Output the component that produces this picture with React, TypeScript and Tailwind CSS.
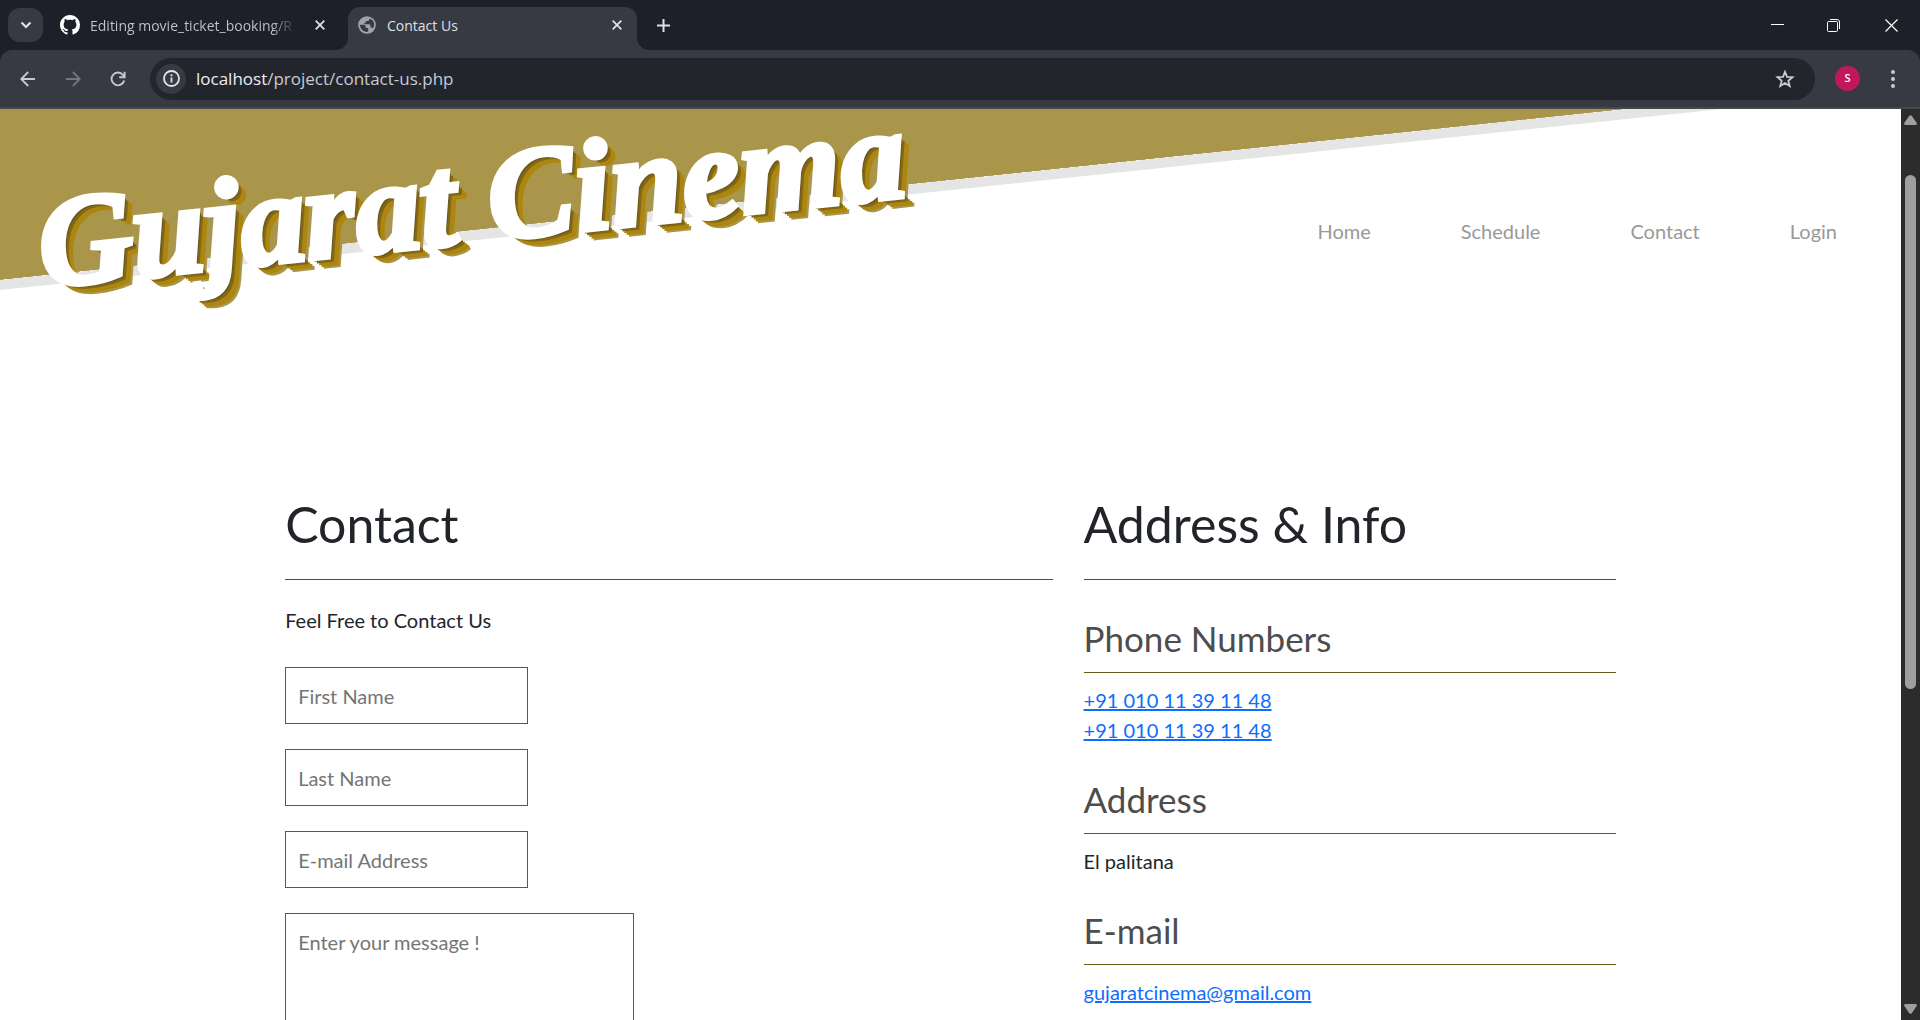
import type { ReactNode } from "react";

const navLinks = ["Home", "Schedule", "Contact", "Login"];

function TitleBar() {
  return (
    <header className="flex h-[50px] shrink-0 items-stretch bg-[#1d2029] pl-2 text-[#dfe0e6]">
      <button aria-label="Search tabs" className="mt-2 flex h-[34px] w-[35px] items-center justify-center rounded-xl bg-[#383a43]">
        <svg width="12" height="8" viewBox="0 0 12 8" fill="none" stroke="currentColor" strokeWidth="2.200">
          <path d="M1.500 1.500 6 6 10.500 1.500" />
        </svg>
      </button>

      <div className="flex w-[305px] items-center pr-[23px] pl-[17px]">
        <svg width="20" height="20" viewBox="0 0 16 16" fill="#fff" className="shrink-0">
          <path d="M8 0C3.58 0 0 3.58 0 8c0 3.54 2.29 6.53 5.47 7.59.4.07.55-.17.55-.38 0-.19-.01-.82-.01-1.49-2.01.37-2.53-.49-2.69-.94-.09-.23-.48-.94-.82-1.13-.28-.15-.68-.52-.01-.53.63-.01 1.08.58 1.23.82.72 1.21 1.87.87 2.33.66.07-.52.28-.87.51-1.07-1.78-.2-3.64-.89-3.64-3.95 0-.87.31-1.59.82-2.15-.08-.2-.36-1.02.08-2.12 0 0 .67-.21 2.2.82.64-.18 1.32-.27 2-.27s1.36.09 2 .27c1.53-1.04 2.2-.82 2.2-.82.44 1.1.16 1.92.08 2.12.51.56.82 1.27.82 2.15 0 3.07-1.87 3.75-3.65 3.95.29.25.54.73.54 1.48 0 1.07-.01 1.93-.01 2.2 0 .21.15.46.55.38A8.01 8.01 0 0 0 16 8c0-4.42-3.58-8-8-8Z" />
        </svg>
        <span className="ml-[10px] bg-linear-to-r from-[#c3c6d0] from-90% to-[#3a3d46] bg-clip-text text-[14px] whitespace-nowrap text-transparent">
          Editing movie_ticket_booking/R
        </span>
        <button aria-label="Close tab" className="ml-auto">
          <Cross />
        </button>
      </div>

      <div className="relative mt-[7px] flex w-[289px] items-center rounded-t-xl bg-[#383a43] pr-[15px] pb-[7px] pl-[10px]">
        <span className="absolute bottom-0 -left-3 size-3 bg-[radial-gradient(circle_at_0_0,transparent_12px,#383a43_12px)]" />
        <span className="absolute -right-3 bottom-0 size-3 bg-[radial-gradient(circle_at_100%_0,transparent_12px,#383a43_12px)]" />
        <svg width="18" height="18" viewBox="0 0 18 18">
          <circle cx="9" cy="9" r="8.8" fill="#9fa3ae" />
          <path
            d="M1.900 8.800h3.300c1.700 0 2.600.9 2.600 2.200v.9h2.400v3.900c-4.300.7-8.100-2.400-8.300-7ZM11.600 2.500v.6c0 1.200-.9 2-2.100 2H7.900v1.700H6.200v1.500h4.700c.9 0 1.500.6 1.500 1.500v1.600h.8c.8 0 1.400.5 1.600 1.200 2.800-3.700 1.300-8.700-3.200-10.100Z"
            fill="#383a43"
          />
        </svg>
        <span className="ml-[11px] text-[14px]">Contact Us</span>
        <button aria-label="Close tab" className="ml-auto">
          <Cross />
        </button>
      </div>

      <button aria-label="New tab" className="ml-5 flex items-center">
        <svg width="13" height="13" viewBox="0 0 13 13" stroke="currentColor" strokeWidth="2">
          <path d="M6.500 0v13M0 6.500h13" />
        </svg>
      </button>

      <div className="ml-auto flex">
        <button aria-label="Minimize" className="flex w-[56px] items-center justify-center">
          <svg width="13" height="13" viewBox="0 0 13 13" stroke="#fff">
            <path d="M0 5.500h13" />
          </svg>
        </button>
        <button aria-label="Restore" className="flex w-[57px] items-center justify-center">
          <svg width="13" height="13" viewBox="0 0 13 13" fill="none" stroke="#fff">
            <rect x=".5" y="2.500" width="10" height="10" rx="1" />
            <path d="M3 .5h7a2.500 2.500 0 0 1 2.500 2.500v7" />
          </svg>
        </button>
        <button aria-label="Close" className="flex w-[58px] items-center justify-center">
          <svg width="13" height="13" viewBox="0 0 13 13" stroke="#fff" strokeWidth="1.200">
            <path d="m.5.5 12 12M12.500.5l-12 12" />
          </svg>
        </button>
      </div>
    </header>
  );
}

function Cross() {
  return (
    <svg width="10" height="10" viewBox="0 0 10 10" stroke="currentColor" strokeWidth="1.800">
      <path d="m.7.7 8.600 8.600M9.300.7.700 9.300" />
    </svg>
  );
}

function Toolbar() {
  return (
    <div className="bg-[#1d2029]">
      <div className="flex h-[59px] items-center rounded-t-xl border-b-2 border-[#47474b] bg-[#383a43] pl-5 text-[#c7cad3]">
        <button aria-label="Back" className="flex w-[45px]">
          <svg width="16" height="16" viewBox="0 0 16 16" fill="none" stroke="currentColor" strokeWidth="1.800">
            <path d="M15 8H1.500M8.200 1 1.200 8l7 7" />
          </svg>
        </button>
        <button aria-label="Forward" className="flex w-[45px] text-[#74767e]">
          <svg width="16" height="16" viewBox="0 0 16 16" fill="none" stroke="currentColor" strokeWidth="1.800">
            <path d="M1 8h13.500M7.800 1l7 7-7 7" />
          </svg>
        </button>
        <button aria-label="Reload" className="flex w-10">
          <svg width="16" height="16" viewBox="0 0 16 16" fill="none" stroke="currentColor" strokeWidth="1.900">
            <path d="M14.200 9.500A6.400 6.400 0 1 1 12.900 3.800L14.500 5.500" />
            <path d="M14.600.8v5.400H9.200" />
          </svg>
        </button>
        <div className="flex h-[42px] flex-1 items-center rounded-full bg-[#23252d] pr-5 pl-[6px]">
          <button aria-label="Site information" className="flex size-[30px] items-center justify-center rounded-full bg-[#383a43] text-[#e3e4e9]">
            <svg width="17" height="17" viewBox="0 0 17 17" fill="none" stroke="currentColor" strokeWidth="1.800">
              <circle cx="8.500" cy="8.500" r="7.500" />
              <path d="M8.500 7.500v5M8.500 4.300v1.900" />
            </svg>
          </button>
          <p className="ml-[10px] text-[17px] text-[#c7cad3]">
            <span className="text-[#ecedf1]">localhost</span>/project/contact-us.php
          </p>
          <button aria-label="Bookmark this tab" className="ml-auto">
            <svg width="20" height="20" viewBox="0 0 20 20" fill="none" stroke="currentColor" strokeWidth="1.800">
              <path d="m10 2.800 2 5 5.500.4-4.200 3.500 1.400 5.300L10 14.100 5.300 17l1.400-5.300-4.200-3.500L8 7.800Z" />
            </svg>
          </button>
        </div>
        <button aria-label="Profile" className="ml-5 flex size-[25px] items-center justify-center rounded-full bg-[#c2185b] text-[11px] font-semibold text-white">
          S
        </button>
        <button aria-label="Menu" className="mr-[17px] ml-[22px] flex w-[21px] justify-center">
          <svg width="4" height="18" viewBox="0 0 4 18" fill="currentColor">
            <circle cx="2" cy="2" r="2" />
            <circle cx="2" cy="9" r="2" />
            <circle cx="2" cy="16" r="2" />
          </svg>
        </button>
      </div>
    </div>
  );
}

function SiteHeader() {
  return (
    <header className="relative flex items-start justify-between pr-16">
      <div className="absolute bottom-[204px] left-0 h-[400px] w-[110%] origin-bottom-left -rotate-6 border-b-10 border-[#e5e5e5] bg-[#aa964b] bg-clip-padding" />
      <h1 className="relative ml-9 h-[385px] pt-6 font-['Liberation_Serif'] text-[130px] leading-none font-bold whitespace-nowrap text-white italic">
        <span className="block -rotate-6 [-webkit-text-stroke:5px_white] [text-shadow:2px_2px_#6b5716,3px_3px_#6b5716,5px_5px_#836719,7px_7px_#ad860f,9px_9px_#ad860f,11px_11px_#aa964b]">
          Gujarat Cinema
        </span>
      </h1>
      <nav className="relative mt-[107px] flex gap-[90px] leading-[30px]">
        {navLinks.map((label) => (
          <a key={label} href="#" className="text-[#999]">
            {label}
          </a>
        ))}
      </nav>
    </header>
  );
}

function Heading({ children }: { children: ReactNode }) {
  return (
    <h2 className="mb-[25px] border-b border-[#4d4d4d] pb-[25px] text-[50px] leading-[60px]">
      {children}
    </h2>
  );
}

function InfoBlock({ title, children }: { title: string; children: ReactNode }) {
  return (
    <section className="flex flex-col items-start">
      <h3 className="mb-3 w-full border-b border-[#6b5a16] pb-[13px] text-[35px] leading-[42px] text-[#4d4d4d]">
        {title}
      </h3>
      {children}
    </section>
  );
}

const fieldClass =
  "border border-[#6b5a16] bg-white px-3 pt-[13px] pb-3 leading-[30px] placeholder:text-[#757575]";
const linkClass = "text-[#0d6efd] underline";

function ContactPage() {
  return (
    <main className="min-w-0 flex-1 overflow-hidden bg-white font-[Lato,sans-serif] text-[20px] leading-[30px] text-[#212529]">
      <SiteHeader />
      <div className="mx-auto flex w-[70%]">
        <section className="w-[60%] pr-[31px]">
          <Heading>Contact</Heading>
          <p>Feel Free to Contact Us</p>
          <form className="mt-8 flex flex-col items-start gap-[25px]">
            <input aria-label="First Name" placeholder="First Name" className={`h-[57px] w-[243px] ${fieldClass}`} />
            <input aria-label="Last Name" placeholder="Last Name" className={`h-[57px] w-[243px] ${fieldClass}`} />
            <input aria-label="E-mail Address" type="email" placeholder="E-mail Address" className={`h-[57px] w-[243px] ${fieldClass}`} />
            <textarea aria-label="Message" placeholder="Enter your message !" className={`h-[200px] w-[349px] resize-none ${fieldClass}`} />
          </form>
        </section>
        <section className="w-[40%]">
          <Heading>Address &amp; Info</Heading>
          <div className="flex flex-col gap-[33px] pt-3">
            <InfoBlock title="Phone Numbers">
              <a href="tel:+9101011391148" className={linkClass}>+91 010 11 39 11 48</a>
              <a href="tel:+9101011391148" className={linkClass}>+91 010 11 39 11 48</a>
            </InfoBlock>
            <InfoBlock title="Address">
              <p>El palitana</p>
            </InfoBlock>
            <InfoBlock title="E-mail">
              <a href="mailto:gujaratcinema@gmail.com" className={linkClass}>gujaratcinema@gmail.com</a>
            </InfoBlock>
          </div>
        </section>
      </div>
    </main>
  );
}

function ScrollBar() {
  return (
    <div className="flex w-[19px] flex-col items-center bg-[#2c2c2c] py-1.5">
      <svg width="13" height="10" viewBox="0 0 13 10" fill="#9f9f9f">
        <path d="M5.300.8q1.200-1.300 2.400 0L12.700 8q.6 2-1.200 2h-10Q-.3 10 .3 8Z" />
      </svg>
      <div className="flex min-h-0 w-full flex-1 flex-col items-center">
        <div className="flex-[50]" />
        <div className="w-[11px] flex-[515] rounded-full bg-[#9f9f9f]" />
        <div className="flex-[316]" />
      </div>
      <svg width="13" height="10" viewBox="0 0 13 10" fill="#9f9f9f">
        <path d="M5.300 9.200q1.200 1.300 2.400 0L12.700 2q.6-2-1.200-2h-10Q-.3 0 .3 2Z" />
      </svg>
    </div>
  );
}

export default function App() {
  return (
    <div className="flex h-screen flex-col overflow-hidden font-['Open_Sans',sans-serif]">
      <TitleBar />
      <Toolbar />
      <div className="flex min-h-0 flex-1">
        <ContactPage />
        <ScrollBar />
      </div>
    </div>
  );
}
